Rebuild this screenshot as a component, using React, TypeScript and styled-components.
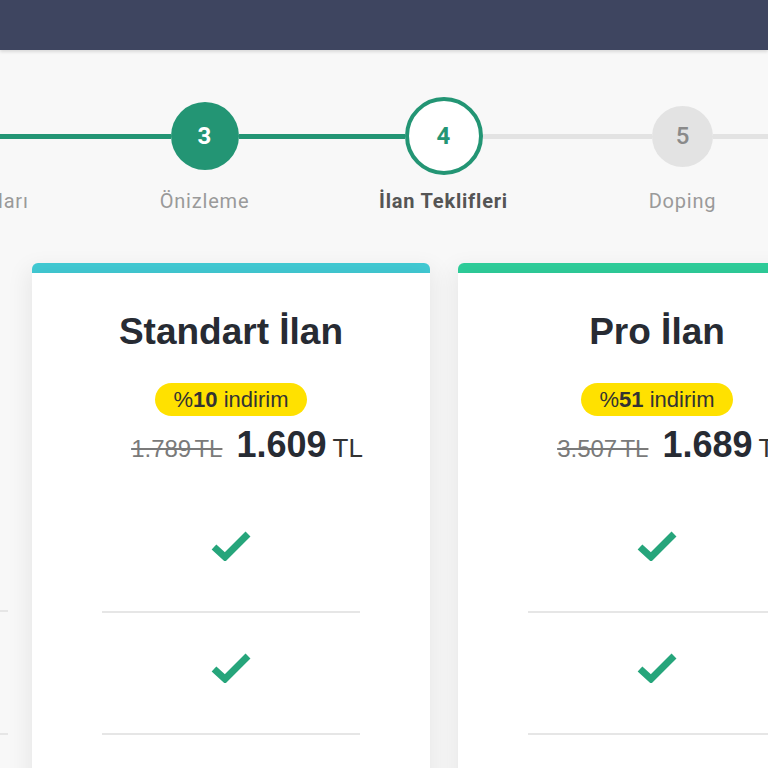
import React from "react";
import styled, { createGlobalStyle } from "styled-components";

const Global = createGlobalStyle`
  html, body { margin: 0; padding: 0; }
  body {
    background: #f8f8f8;
    font-family: "Liberation Sans", Arial, sans-serif;
    overflow: hidden;
    width: 768px;
    height: 768px;
  }
`;

const Page = styled.div`
  width: 768px;
  height: 768px;
  overflow: hidden;
  display: flex;
  flex-direction: column;
`;

const Header = styled.header`
  height: 50px;
  flex: none;
  background: #3e4560;
  box-shadow: 0 2px 3px rgba(0, 0, 0, 0.12);
  position: relative;
  z-index: 2;
`;

const Stepper = styled.nav`
  display: flex;
  margin-top: 47px;
  margin-left: -154px;
  flex: none;
`;

const Step = styled.div`
  width: 239px;
  flex: none;
  display: flex;
  flex-direction: column;
  align-items: center;
`;

const NodeRow = styled.div`
  width: 100%;
  height: 78px;
  display: flex;
  align-items: center;
`;

const Track = styled.div<{ $done: boolean; $hidden?: boolean }>`
  flex: 1;
  height: 5px;
  background: ${(p) => (p.$hidden ? "transparent" : p.$done ? "#239574" : "#e3e3e3")};
`;

type NodeState = "done" | "active" | "todo";

const Node = styled.div<{ $state: NodeState }>`
  flex: none;
  box-sizing: border-box;
  border-radius: 50%;
  display: flex;
  align-items: center;
  justify-content: center;
  font-family: Roboto, "Liberation Sans", sans-serif;
  font-size: 24px;
  width: ${(p) => (p.$state === "active" ? 78 : p.$state === "done" ? 68 : 61)}px;
  height: ${(p) => (p.$state === "active" ? 78 : p.$state === "done" ? 68 : 61)}px;
  background: ${(p) => (p.$state === "done" ? "#239574" : p.$state === "active" ? "#ffffff" : "#e3e3e3")};
  border: ${(p) => (p.$state === "active" ? "4px solid #239574" : "none")};
  color: ${(p) => (p.$state === "done" ? "#ffffff" : p.$state === "active" ? "#239574" : "#8a8a8a")};
  font-weight: ${(p) => (p.$state === "todo" ? 500 : 700)};
`;

const StepLabel = styled.div<{ $active: boolean }>`
  margin-top: 14px;
  font-family: Roboto, "Liberation Sans", sans-serif;
  font-size: 20px;
  line-height: 24px;
  letter-spacing: 0.8px;
  white-space: nowrap;
  color: ${(p) => (p.$active ? "#555555" : "#9a9a9a")};
  font-weight: ${(p) => (p.$active ? 700 : 400)};
`;

const Cards = styled.section`
  display: flex;
  align-items: flex-start;
  margin-top: 50px;
  gap: 28px;
`;

const LabelColumn = styled.div`
  width: 8px;
  flex: none;
  padding-top: 226px;
  margin-right: -4px;
`;

const LabelRow = styled.div`
  height: 121px;
  border-bottom: 2px solid #e6e6e6;
`;

const Card = styled.article`
  width: 398px;
  flex: none;
  display: flex;
  flex-direction: column;
`;

const CardTop = styled.div<{ $color: string }>`
  height: 10px;
  border-radius: 6px 6px 0 0;
  background: ${(p) => p.$color};
`;

const CardBody = styled.div`
  background: #ffffff;
  box-shadow: 0 0 22px 4px rgba(0, 0, 0, 0.07);
  display: flex;
  flex-direction: column;
  align-items: center;
  padding-top: 39px;
  height: 600px;
`;

const Title = styled.h2`
  margin: 0;
  font-size: 37px;
  line-height: 40px;
  font-weight: 700;
  color: #272b33;
`;

const Badge = styled.div`
  margin-top: 31px;
  height: 33px;
  padding: 0 19px;
  border-radius: 17px;
  background: #ffe100;
  display: flex;
  align-items: center;
  font-size: 22px;
  color: #333333;
  b { font-weight: 700; }
`;

const PriceRow = styled.div`
  margin-top: 9px;
  padding-left: 32px;
  display: flex;
  align-items: baseline;
  line-height: 40px;
  white-space: nowrap;
`;

const OldPrice = styled.s`
  font-size: 24px;
  color: #7a7a7a;
  margin-right: 14px;
  word-spacing: -3px;
`;

const NewPrice = styled.span`
  font-size: 36px;
  font-weight: 700;
  color: #272b33;
  margin-right: 6px;
`;

const Currency = styled.span`
  font-size: 26px;
  color: #333333;
`;

const Features = styled.ul`
  list-style: none;
  margin: 22px 0 0;
  padding: 0 70px;
  align-self: stretch;
`;

const Feature = styled.li`
  height: 122px;
  border-bottom: 2px solid #e6e6e6;
  display: flex;
  justify-content: center;
  padding-top: 40px;
  box-sizing: border-box;
`;

const Check = () => (
  <svg width="40" height="30" viewBox="0 0 40 30" aria-hidden="true">
    <polyline
      points="3,16 14,26 37,3"
      fill="none"
      stroke="#26a57b"
      strokeWidth="7"
      strokeLinejoin="miter"
    />
  </svg>
);

const steps: { n: number; label: string; state: NodeState }[] = [
  { n: 2, label: "İlan Detayları", state: "done" },
  { n: 3, label: "Önizleme", state: "done" },
  { n: 4, label: "İlan Teklifleri", state: "active" },
  { n: 5, label: "Doping", state: "todo" },
  { n: 6, label: "Ödeme", state: "todo" },
];

const plans = [
  { title: "Standart İlan", color: "#42ccd6", pct: "10", old: "1.789 TL", price: "1.609" },
  { title: "Pro İlan", color: "#2fd09c", pct: "51", old: "3.507 TL", price: "1.689" },
];

export default function App() {
  return (
    <Page>
      <Global />
      <Header />
      <Stepper>
        {steps.map((s, i) => (
          <Step key={s.n}>
            <NodeRow>
              <Track $done={s.state !== "todo"} />
              <Node $state={s.state}>{s.n}</Node>
              <Track
                $done={s.state === "done"}
                $hidden={i === steps.length - 1}
              />
            </NodeRow>
            <StepLabel $active={s.state === "active"}>{s.label}</StepLabel>
          </Step>
        ))}
      </Stepper>
      <Cards>
        <LabelColumn>
          <LabelRow />
          <LabelRow />
        </LabelColumn>
        {plans.map((p) => (
          <Card key={p.title}>
            <CardTop $color={p.color} />
            <CardBody>
              <Title>{p.title}</Title>
              <Badge>
                %<b>{p.pct}</b>&nbsp;indirim
              </Badge>
              <PriceRow>
                <OldPrice>{p.old}</OldPrice>
                <NewPrice>{p.price}</NewPrice>
                <Currency>TL</Currency>
              </PriceRow>
              <Features>
                <Feature>
                  <Check />
                </Feature>
                <Feature>
                  <Check />
                </Feature>
              </Features>
            </CardBody>
          </Card>
        ))}
      </Cards>
    </Page>
  );
}
